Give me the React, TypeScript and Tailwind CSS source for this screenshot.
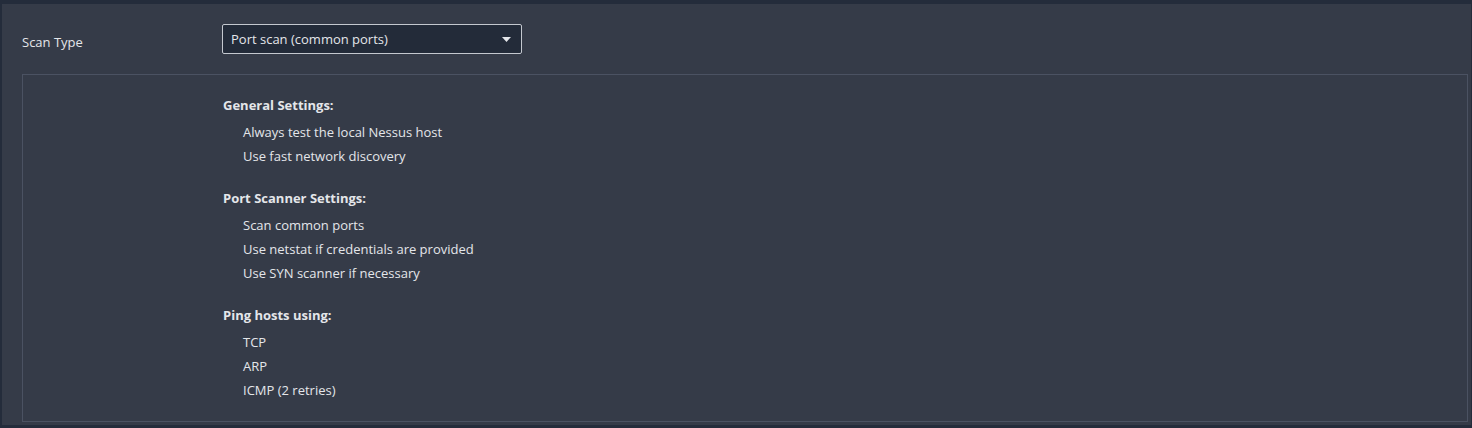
import React from 'react';

const groups = [
  {
    title: 'General Settings:',
    items: ['Always test the local Nessus host', 'Use fast network discovery'],
  },
  {
    title: 'Port Scanner Settings:',
    items: ['Scan common ports', 'Use netstat if credentials are provided', 'Use SYN scanner if necessary'],
  },
  {
    title: 'Ping hosts using:',
    items: ['TCP', 'ARP', 'ICMP (2 retries)'],
  },
];

const App: React.FC = () => {
  return (
    <div className="w-[1472px] h-[428px] bg-[#242c3b] pt-1 pl-0.5 pr-px pb-[3px] font-['Open_Sans',sans-serif] text-[13px] text-[#e4e6ea]">
      <div className="h-full bg-[#353b48] pt-5 pl-5 pr-[3px]">
        {/* scan type row */}
        <div className="flex items-center">
          <label className="w-[200px] pt-[8px]">Scan Type</label>
          <div className="w-[300px] h-[30px] flex items-center justify-between bg-[#232b39] border border-[#c4c8cf] rounded-[2px] pl-2 pr-[10px]">
            <span className="pt-[2px]">Port scan (common ports)</span>
            <svg width="9" height="5" viewBox="0 0 9 5" className="fill-[#e4e6ea]">
              <path d="M0 0 L9 0 L4.5 5 Z" />
            </svg>
          </div>
        </div>

        {/* settings summary */}
        <div className="mt-[20px] border border-[#4b5262] pl-[200px] pt-[18px] pb-[19px] flex flex-col gap-[18px]">
          {groups.map((g) => (
            <div key={g.title}>
              <div className="font-bold leading-6 mb-[3px]">{g.title}</div>
              {g.items.map((it) => (
                <div key={it} className="leading-6 pl-5">{it}</div>
              ))}
            </div>
          ))}
        </div>
      </div>
    </div>
  );
};

export default App;
